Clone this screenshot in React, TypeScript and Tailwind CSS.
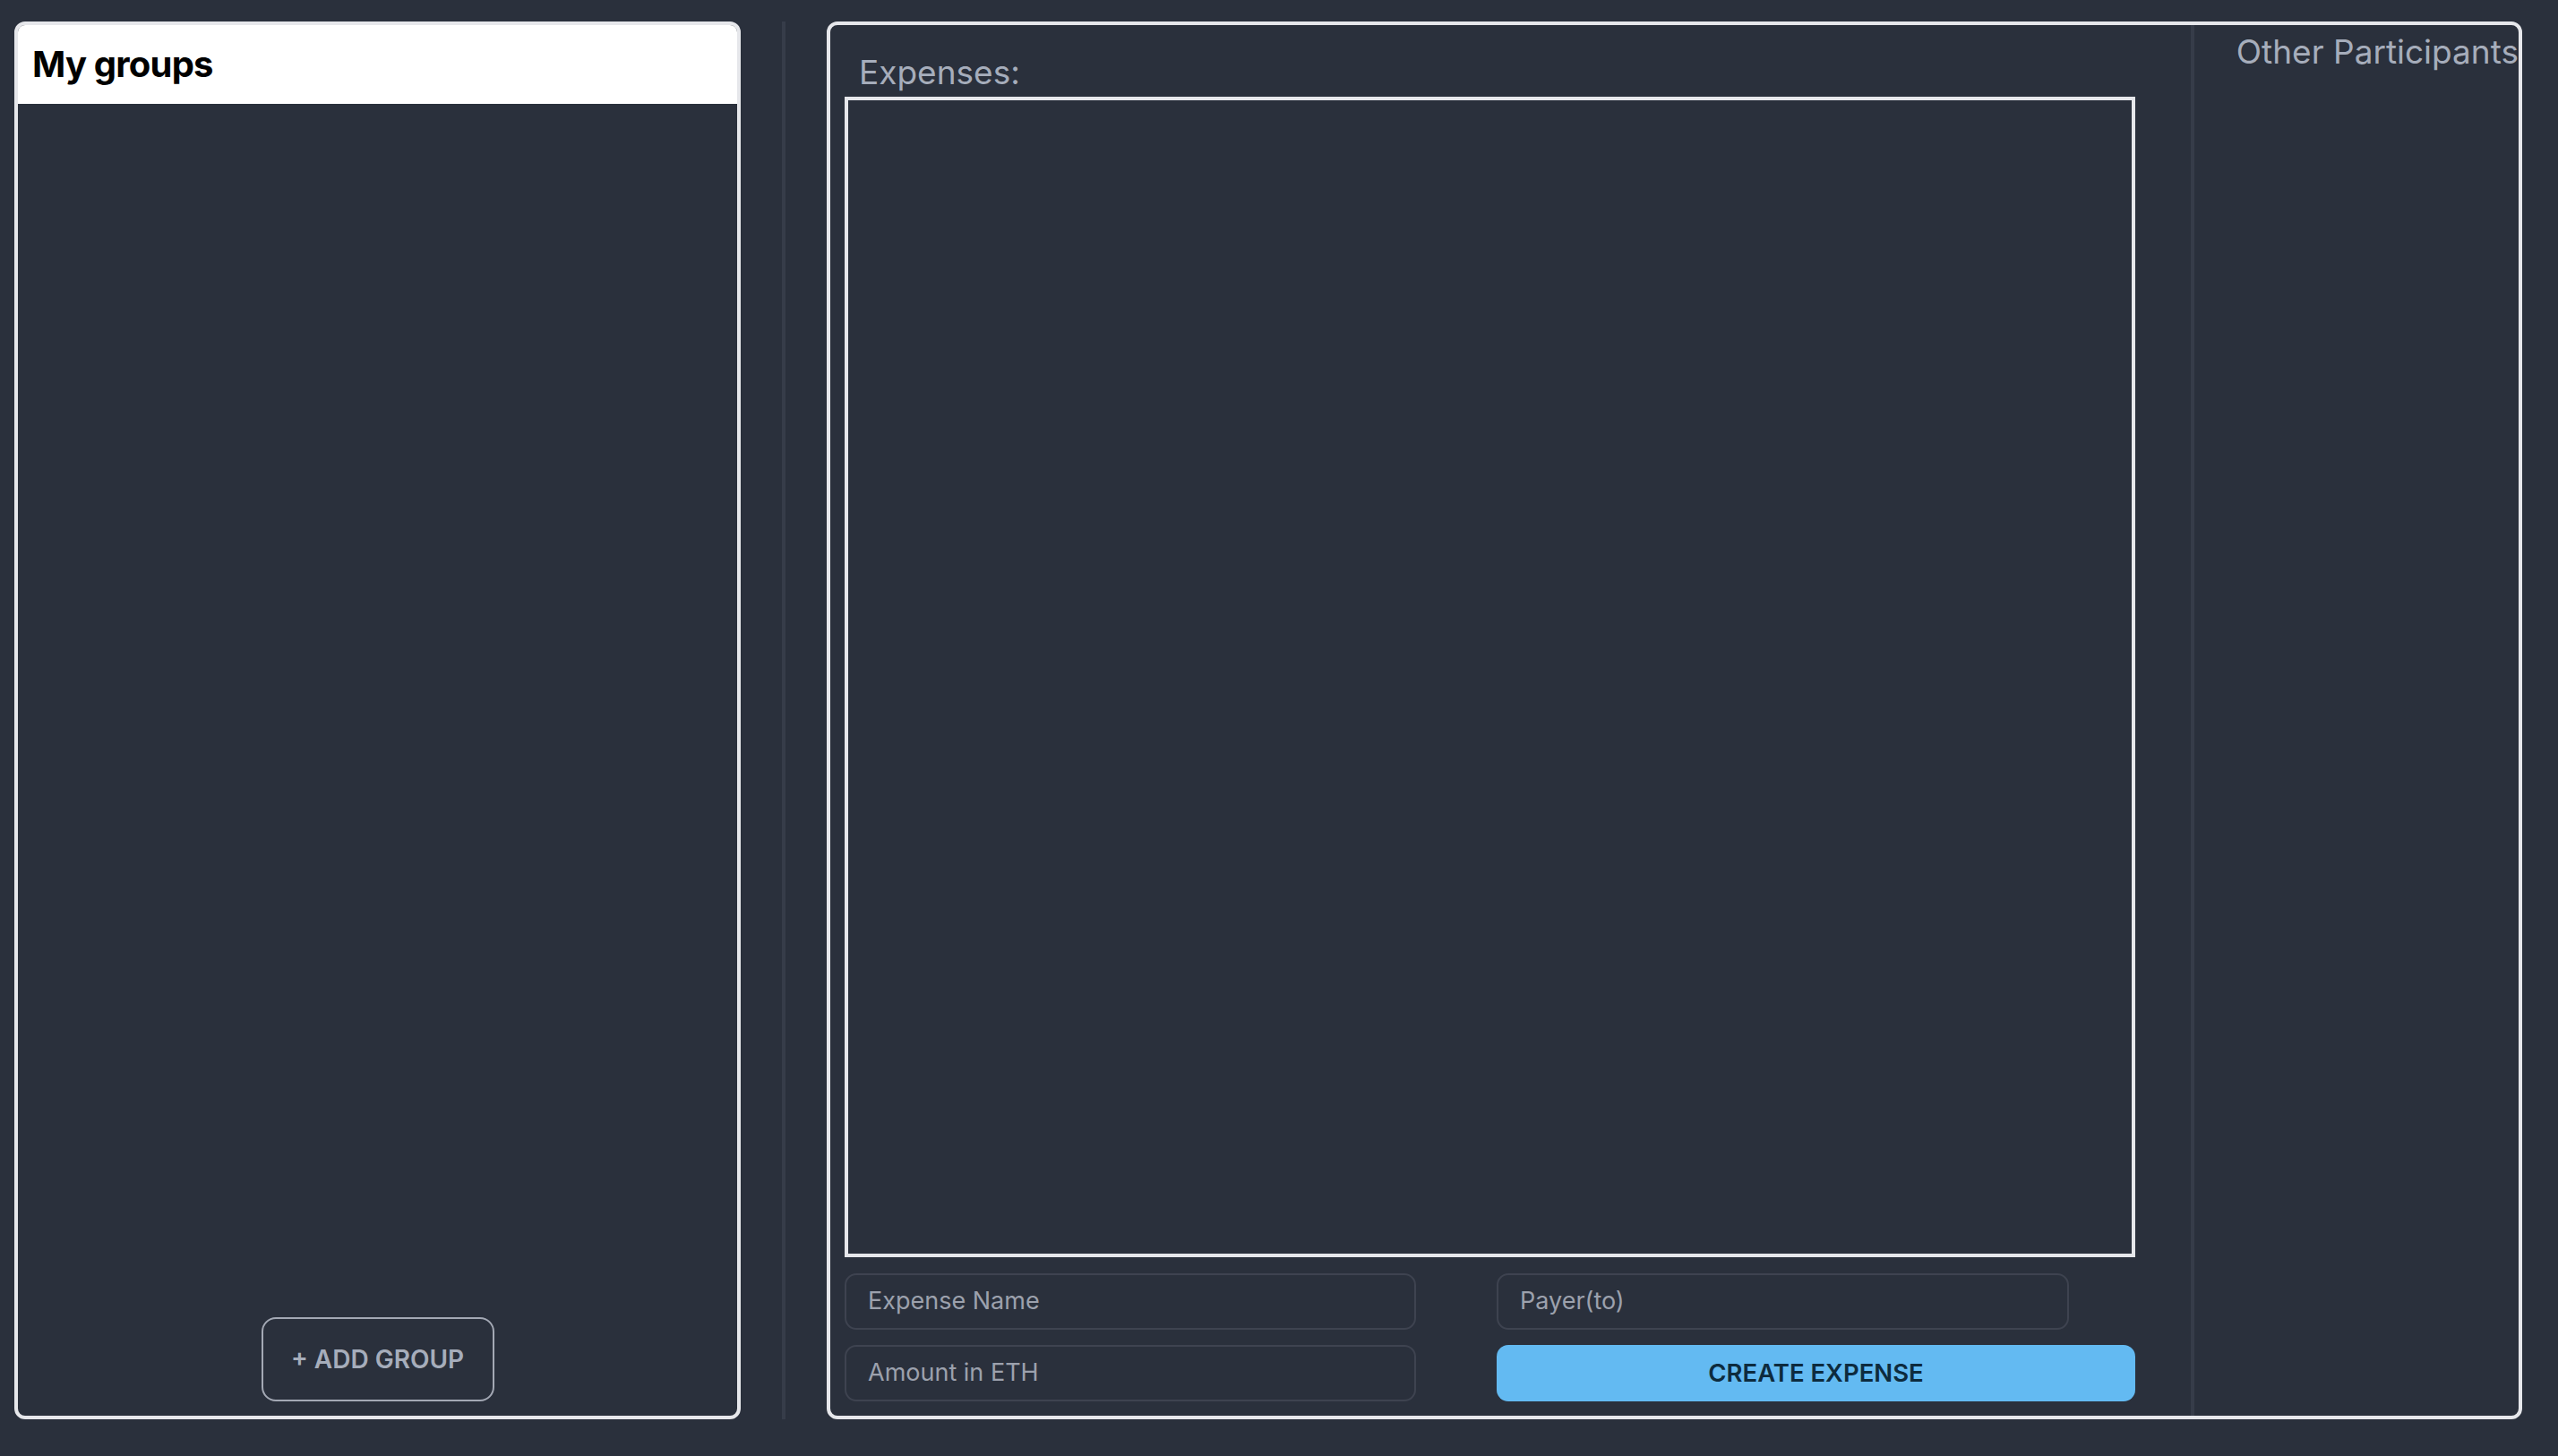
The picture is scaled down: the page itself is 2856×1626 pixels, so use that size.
import React from "react";

export default function App() {
  return (
    <div
      className="w-full h-[1626px] bg-[#2a303c] flex pt-[24px] pb-[41px] pl-[16px] pr-[40px]"
      style={{ fontFamily: "Inter, 'Noto Sans', sans-serif" }}
    >
      {/* Left panel */}
      <div className="w-[811px] h-full border-4 border-[#e6e7eb] rounded-xl overflow-hidden flex flex-col">
        <div className="h-[88px] bg-white flex items-center pl-4">
          <span className="text-[40px] font-bold text-black leading-none tracking-[-0.8px]">My groups</span>
        </div>
        <div className="flex-1" />
        <div className="flex justify-center pb-[16px]">
          <button className="w-[260px] h-[94px] border-2 border-[#a3a8b4] rounded-[16px] text-[#a6adbb] text-[28px] font-semibold flex items-center justify-center">
            + ADD GROUP
          </button>
        </div>
      </div>

      {/* Divider */}
      <div className="w-[96px] flex justify-center">
        <div className="w-[4px] h-full bg-[#363c49]" />
      </div>

      {/* Right panel */}
      <div className="flex-1 h-full border-4 border-[#e6e7eb] rounded-xl flex">
        <div className="flex-1 flex flex-col pl-4 pr-[62px] pt-[33px] pb-[16px]">
          <div className="h-[40px] pl-[16px] text-[37px] leading-[40px] text-[#a6adbb]">Expenses:</div>
          <div className="flex-1 mt-[7px] border-4 border-[#e6e7eb]" />
          <div className="mt-[18px] grid grid-cols-[638px_713px] gap-x-[90px] gap-y-[17px]">
            <div className="h-[63px] border-2 border-[#3e4350] rounded-[13px] flex items-center pl-[24px] text-[27px] text-[#9ca1ad]">
              Expense Name
            </div>
            <div className="w-[639px] h-[63px] border-2 border-[#3e4350] rounded-[13px] flex items-center pl-[24px] text-[27px] text-[#9ca1ad]">
              Payer(to)
            </div>
            <div className="h-[63px] border-2 border-[#3e4350] rounded-[13px] flex items-center pl-[24px] text-[27px] text-[#9ca1ad]">
              Amount in ETH
            </div>
            <button className="h-[63px] bg-[#63baf2] rounded-[13px] flex items-center justify-center text-[27.5px] font-semibold text-[#0d2b3e]">
              CREATE EXPENSE
            </button>
          </div>
        </div>
        <div className="w-[4px] h-full bg-[#363c49]" />
        <div className="w-[362px] flex justify-end pt-[10px]">
          <div className="h-[40px] text-[37px] leading-[40px] text-[#a6adbb] whitespace-nowrap">
            Other Participants
          </div>
        </div>
      </div>
    </div>
  );
}
